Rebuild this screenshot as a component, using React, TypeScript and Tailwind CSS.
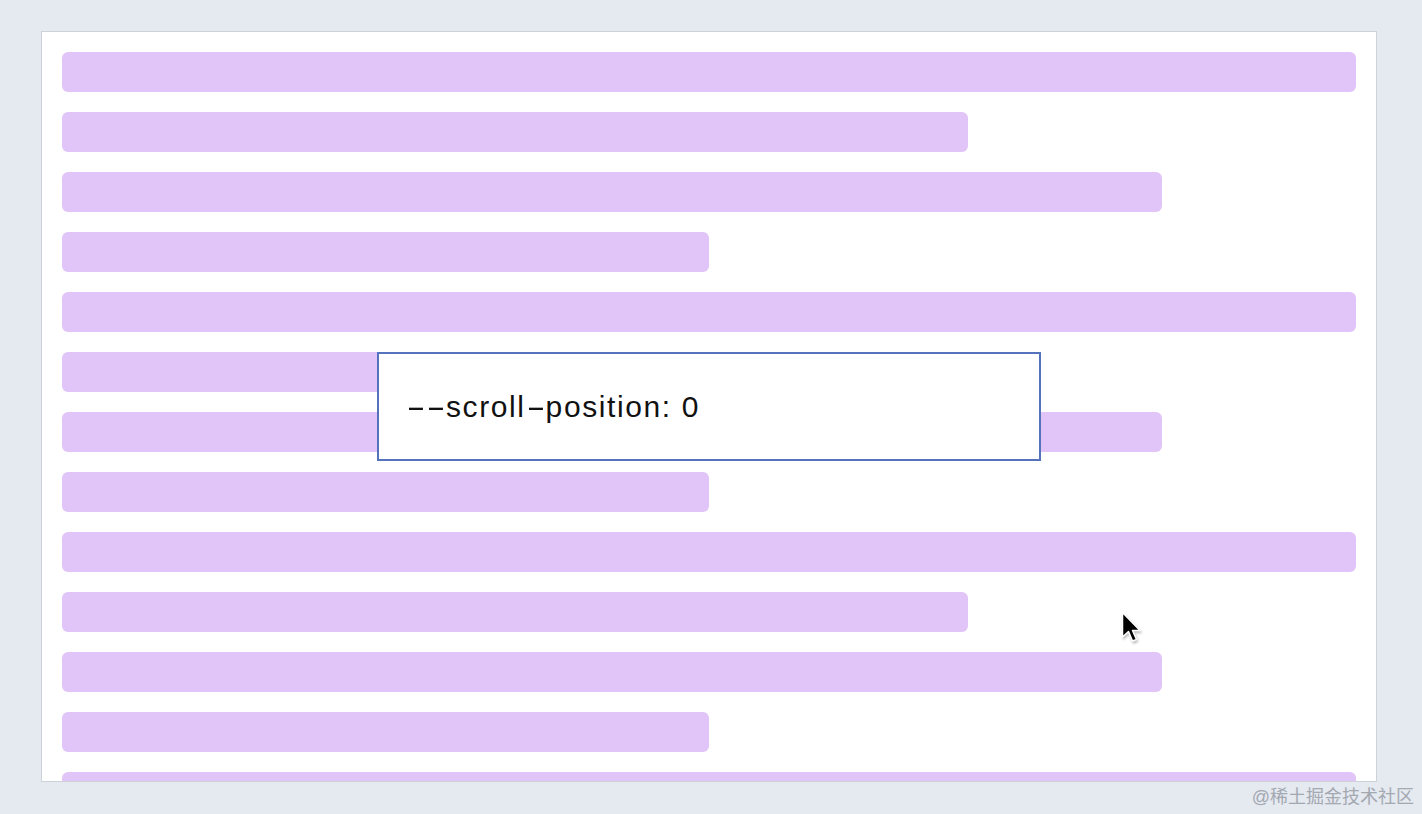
import * as React from "react";

// bar widths repeat: full, 70%, 85%, 50%
const widths = ["w-full", "w-[906px]", "w-[1100px]", "w-[647px]"];

// the original font draws wide hyphens, so stretch them a bit
const Dash = () => (
  <span className="mx-[5px] inline-block scale-x-[1.9] tracking-normal">-</span>
);

export default function App() {
  const rows = Array.from({ length: 14 }, (_, i) => widths[i % 4]);

  return (
    <div
      className="relative w-[1422px] h-[814px] overflow-hidden bg-[#e5e9f0]"
      style={{ fontFamily: '"Liberation Sans", "Noto Sans CJK SC", sans-serif' }}
    >
      <div className="ml-[41px] pt-[31px]">
        <div className="w-[1336px] h-[751px] overflow-hidden border border-[#cdd1d8] bg-white p-5">
          <div className="flex flex-col gap-5">
            {rows.map((w, i) => (
              <div key={i} className={`${w} h-10 shrink-0 rounded-md bg-[#e1c5f8]`} />
            ))}
          </div>
        </div>
      </div>

      {/* floating scroll indicator */}
      <div className="absolute left-[377px] top-[352px] flex h-[109px] w-[664px] items-center border-2 border-[#5573bd] bg-white pl-[27px]">
        <span className="text-[30px] tracking-[1.6px] text-[#111]">
          <Dash />
          <Dash />
          scroll
          <Dash />
          position: 0
        </span>
      </div>

      {/* mouse cursor */}
      <svg
        className="absolute left-[1121px] top-[611px] drop-shadow-[1px_2px_1px_rgba(0,0,0,0.25)]"
        width="22"
        height="33"
        viewBox="0 0 22 33"
      >
        <path
          d="M1.5 1.5 L1.5 26 L7.5 20.5 L11.5 30 L15.5 28.5 L11.5 19.5 L19 19.5 Z"
          fill="#000"
          stroke="#fff"
          strokeWidth="1.5"
          strokeLinejoin="round"
        />
      </svg>

      {/* watermark */}
      <div className="absolute right-[8px] bottom-[3px] text-[18px] text-[#a3a8b1]">
        @稀土掘金技术社区
      </div>
    </div>
  );
}
